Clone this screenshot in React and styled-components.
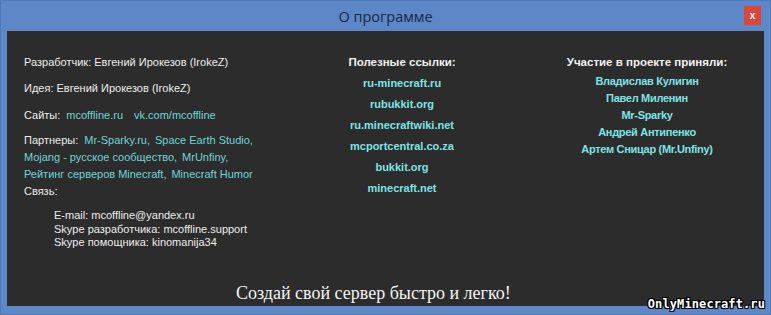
import React from "react";
import styled, { createGlobalStyle } from "styled-components";

const GlobalStyle = createGlobalStyle`
  html, body {
    margin: 0;
    padding: 0;
    background: #5d87c7;
  }
  * {
    box-sizing: border-box;
  }
`;

const partners = [
  ["Mr-Sparky.ru,", "Space Earth Studio,"],
  ["Mojang - русское сообщество,", "MrUnfiny,"],
  ["Рейтинг серверов Minecraft,", "Minecraft Humor"],
];

const usefulLinks = [
  "ru-minecraft.ru",
  "rubukkit.org",
  "ru.minecraftwiki.net",
  "mcportcentral.co.za",
  "bukkit.org",
  "minecraft.net",
];

const team = [
  "Владислав Кулигин",
  "Павел Миленин",
  "Mr-Sparky",
  "Андрей Антипенко",
  "Артем Сницар (Mr.Unfiny)",
];

function App() {
  return (
    <>
      <GlobalStyle />
      <Window>
        <TitleBar>
          <Title>О программе</Title>
          <CloseBtn>x</CloseBtn>
        </TitleBar>

        <Body>
          <Columns>
            {/* левая колонка */}
            <InfoCol>
              <Line>Разработчик: Евгений Ирокезов (IrokeZ)</Line>
              <Line $mt={9}>Идея: Евгений Ирокезов (IrokeZ)</Line>
              <Line $mt={10}>
                Сайты:
                <Link $gap={6}>mcoffline.ru</Link>
                <Link $gap={11}>vk.com/mcoffline</Link>
              </Line>
              <Line $mt={8}>
                Партнеры:
                <Link $gap={6}>{partners[0][0]}</Link>
                <Link $gap={5}>{partners[0][1]}</Link>
              </Line>
              {partners.slice(1).map(([a, b]) => (
                <Line key={a}>
                  <Link>{a}</Link>
                  <Link $gap={5}>{b}</Link>
                </Line>
              ))}
              <Line>Связь:</Line>
              <Contacts>
                <Contact>E-mail: mcoffline@yandex.ru</Contact>
                <Contact>Skype разработчика: mcoffline.support</Contact>
                <Contact>Skype помощника: kinomanija34</Contact>
              </Contacts>
            </InfoCol>

            {/* полезные ссылки */}
            <LinksCol>
              <Heading>Полезные ссылки:</Heading>
              {usefulLinks.map((l) => (
                <BoldLink key={l} $lh={21}>{l}</BoldLink>
              ))}
            </LinksCol>

            {/* участники */}
            <TeamCol>
              <Heading>Участие в проекте приняли:</Heading>
              {team.map((n) => (
                <BoldLink key={n} $lh={17} $condensed>{n}</BoldLink>
              ))}
            </TeamCol>
          </Columns>

          <Slogan>Создай свой сервер быстро и легко!</Slogan>
        </Body>

        <Watermark>OnlyMinecraft.ru</Watermark>
      </Window>
    </>
  );
}

export default App;

const Window = styled.div`
  position: relative;
  width: 771px;
  height: 315px;
  display: flex;
  flex-direction: column;
  background: #5d87c7;
  border: 1px solid #4f78b6;
  overflow: hidden;
`;

const TitleBar = styled.div`
  position: relative;
  height: 30px;
  display: flex;
  align-items: center;
  justify-content: center;
`;

const Title = styled.span`
  font-family: "Open Sans", "Liberation Sans", sans-serif;
  font-size: 14.5px;
  color: #17284a;
  margin-top: 1px;
`;

// кнопка закрытия
const CloseBtn = styled.div`
  position: absolute;
  right: 9px;
  top: 5px;
  width: 17px;
  height: 19px;
  background: #d8473a;
  color: #fff;
  font-family: "Liberation Sans", sans-serif;
  font-weight: bold;
  font-size: 10px;
  display: flex;
  align-items: center;
  justify-content: center;
`;

const Body = styled.div`
  flex: 1;
  margin: 0 6px 8px 6px;
  background: #2c2c2c;
  display: flex;
  flex-direction: column;
  color: #ececec;
`;

const Columns = styled.div`
  display: grid;
  grid-template-columns: 295px 200px 1fr;
  padding-top: 23px;
  flex: 1;
`;

const InfoCol = styled.div`
  padding-left: 17px;
  font-family: "Liberation Sans", Arial, sans-serif;
  font-size: 11px;
`;

const Line = styled.div`
  line-height: 17px;
  height: 17px;
  margin-top: ${(p) => p.$mt || 0}px;
  white-space: nowrap;
`;

const Link = styled.span`
  color: #6fd5d6;
  margin-left: ${(p) => p.$gap || 0}px;
`;

const Contacts = styled.div`
  padding-left: 30px;
  margin-top: 9px;
`;

const Contact = styled.div`
  line-height: 13.5px;
  white-space: nowrap;
`;

const LinksCol = styled.div`
  display: flex;
  flex-direction: column;
  align-items: center;
  font-family: "Liberation Sans", Arial, sans-serif;
`;

const TeamCol = styled(LinksCol)`
  padding-left: 28px;
`;

const Heading = styled.div`
  font-weight: bold;
  font-size: 11.5px;
  line-height: 17px;
  color: #f2f2f2;
  margin-bottom: 2px;
`;

const BoldLink = styled.div`
  font-weight: bold;
  font-size: 11px;
  line-height: ${(p) => p.$lh}px;
  color: #7de4e6;
  letter-spacing: ${(p) => (p.$condensed ? "-0.3px" : "0")};
  white-space: nowrap;
`;

const Slogan = styled.div`
  font-family: "Liberation Serif", "DejaVu Serif", serif;
  font-size: 18px;
  color: #f4f4f4;
  padding-left: 229px;
  padding-bottom: 1px;
  line-height: 24px;
`;

const Watermark = styled.div`
  position: absolute;
  right: 5px;
  bottom: 3px;
  font-family: "DejaVu Sans Mono", monospace;
  font-weight: bold;
  font-size: 12px;
  color: #fff;
  letter-spacing: 0.1px;
  text-shadow: 1px 0 0 #000, -1px 0 0 #000, 0 1px 0 #000, 0 -1px 0 #000,
    1px 1px 0 #000, -1px -1px 0 #000, 1px -1px 0 #000, -1px 1px 0 #000;
`;
